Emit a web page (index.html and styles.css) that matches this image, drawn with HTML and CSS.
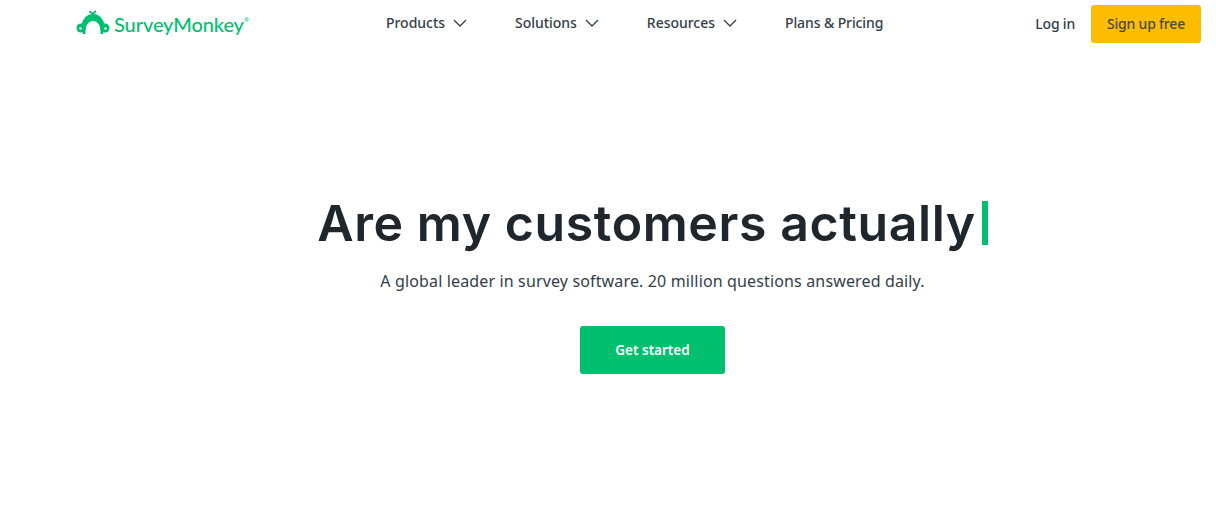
FILE: index.html
```html
<!DOCTYPE html>
<html lang="en">
	<head>
		<meta charset="UTF-8" />
		<meta name="viewport" content="width=device-width, initial-scale=1.0" />
		<title>SurveyMonkey</title>
		<link rel="stylesheet" href="styles.css">
	</head>
	<body>
		<header class="header">
			<a class="logo" href="#">
				<svg class="logo-mark" viewBox="0 0 34 26" width="34" height="26" aria-hidden="true">
					<path d="M5 16C7 8 11 4 17 4C23 4 27 8 29 16L27 24L24.500 24C25 16 22 11 17 11C12 11 9 16 9.500 24L7 24Z" fill="#00bf6f"/>
					<circle cx="5" cy="18" r="4.500" fill="#00bf6f"/>
					<circle cx="29" cy="18" r="4.500" fill="#00bf6f"/>
					<circle cx="4.500" cy="18.500" r="1.200" fill="#fff"/>
					<circle cx="29.500" cy="18.500" r="1.200" fill="#fff"/>
					<path d="M17 5C16.500 3 15 2 13 1.500M17 5C17 3 18.500 2 20 1" fill="none" stroke="#00bf6f" stroke-width="1.800"/>
				</svg>
				<span class="logo-text">SurveyMonkey</span><span class="logo-tm">®</span>
			</a>
			<nav class="nav">
				<a class="nav-item" href="#">Products
					<svg class="chevron" viewBox="0 0 14 8" width="14" height="8" aria-hidden="true"><path d="M1 1l6 6 6-6" /></svg>
				</a>
				<a class="nav-item" href="#">Solutions
					<svg class="chevron" viewBox="0 0 14 8" width="14" height="8" aria-hidden="true"><path d="M1 1l6 6 6-6" /></svg>
				</a>
				<a class="nav-item" href="#">Resources
					<svg class="chevron" viewBox="0 0 14 8" width="14" height="8" aria-hidden="true"><path d="M1 1l6 6 6-6" /></svg>
				</a>
				<a class="nav-item nav-plain" href="#">Plans &amp; Pricing</a>
			</nav>
			<div class="actions">
				<a class="login" href="#">Log in</a>
				<a class="signup" href="#">Sign up free</a>
			</div>
		</header>

		<main class="hero">
			<h1 class="hero-title">Are my customers actually<span class="caret"></span></h1>
			<p class="hero-sub">A global leader in survey software. 20 million questions answered daily.</p>
			<a class="get-started" href="#">Get started</a>
		</main>
	</body>
</html>
```

FILE: styles.css
```css
* {
	box-sizing: border-box;
}
body {
	margin: 0;
	background-color: #fff;
	color: #333e48;
	font-family: "Noto Sans", sans-serif;
}
a {
	color: inherit;
	text-decoration: none;
}
.header {
	display: flex;
	align-items: center;
	height: 48px;
	padding: 0 15px 0 76px;
}
.logo {
	display: flex;
	align-items: center;
	width: 172px;
	color: #00bf6f;
}
.logo-mark {
	flex: none;
	margin-top: -2px;
}
.logo-text {
	margin-left: 4px;
	font-family: "Lato", sans-serif;
	font-size: 20px;
	font-weight: 500;
	letter-spacing: -0.1px;
}
.logo-tm {
	font-size: 6px;
	margin-bottom: 8px;
}
.nav {
	display: flex;
	align-items: center;
	gap: 48px;
	margin-left: 138px;
	padding-bottom: 3px;
	font-size: 14px;
	font-weight: 500;
	letter-spacing: -0.03px;
}
.nav-item {
	display: flex;
	align-items: center;
	gap: 8px;
}
.nav-plain {
	letter-spacing: -0.1px;
}
.chevron {
	fill: none;
	stroke: #333e48;
	stroke-width: 1.3;
}
.actions {
	display: flex;
	align-items: center;
	gap: 16px;
	margin-left: auto;
	font-size: 14px;
	font-weight: 500;
	letter-spacing: -0.2px;
}
.login {
	padding-bottom: 2px;
}
.signup {
	display: flex;
	align-items: center;
	justify-content: center;
	width: 110px;
	height: 38px;
	padding-bottom: 2px;
	border-radius: 3px;
	background-color: #fcbc00;
	color: #4a4a3a;
}
.hero {
	display: flex;
	flex-direction: column;
	align-items: center;
	padding: 148px 0 0 89px;
}
.hero-title {
	display: flex;
	align-items: center;
	margin: 0;
	height: 54px;
	color: #20272c;
	font-family: "Inter", sans-serif;
	font-size: 50px;
	font-weight: 600;
	letter-spacing: 0.6px;
}
.caret {
	width: 6px;
	height: 44px;
	margin-left: 6px;
	background-color: #00bf6f;
}
.hero-sub {
	margin: 19px 0 0;
	color: #333e48;
	font-size: 16px;
	line-height: 24px;
	letter-spacing: 0.145px;
}
.get-started {
	display: flex;
	align-items: center;
	justify-content: center;
	width: 145px;
	height: 48px;
	margin-top: 33px;
	border-radius: 3px;
	background-color: #00bf6f;
	color: #fff;
	font-size: 13.500px;
	font-weight: 600;
}
```
